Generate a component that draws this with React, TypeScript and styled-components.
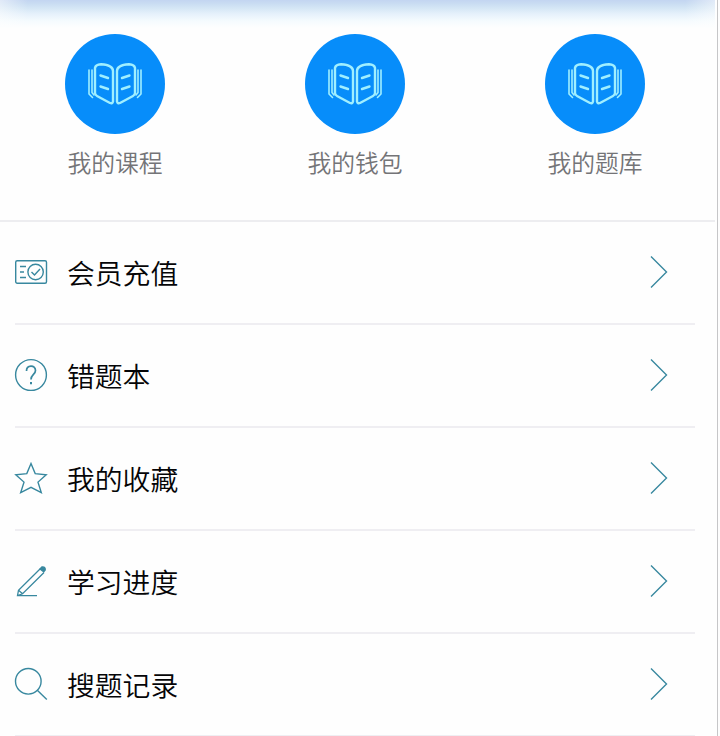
import React from 'react';
import styled, { createGlobalStyle } from 'styled-components';

const GlobalStyle = createGlobalStyle`
  * { box-sizing: border-box; }
  body {
    margin: 0;
    background: #fdfdfd;
    overflow: hidden;
    font-family: "Noto Sans CJK SC", "Noto Sans", sans-serif;
  }
`;

const Page = styled.main`
  width: 718px;
  height: 736px;
  overflow: hidden;
  background: #fefefe;
  border-right: 1px solid #c6c6c8;
`;

const Shortcuts = styled.nav`
  display: flex;
  gap: 140px;
  width: 715px;
  height: 220px;
  padding: 34px 0 0 65px;
  background:
    linear-gradient(to right, rgba(254, 254, 254, 0.5), rgba(254, 254, 254, 0) 28px, rgba(254, 254, 254, 0) 685px, rgba(254, 254, 254, 0.5)) 0 0 / 100% 26px no-repeat,
    linear-gradient(#c3d5f1 0, #c8dbf2 3px, #d4e6f5 8px, #e6f1fb 14px, #f5fbfe 21px, #fefefe 28px);
`;

const Shortcut = styled.a`
  display: flex;
  flex-direction: column;
  align-items: center;
  width: 100px;
`;

const Disc = styled.span`
  display: flex;
  align-items: center;
  justify-content: center;
  width: 100px;
  height: 100px;
  border-radius: 50%;
  background: #078dfa;
`;

const ShortcutLabel = styled.span`
  margin-top: 10px;
  font-size: 23.8px;
  font-weight: 350;
  line-height: 36px;
  white-space: nowrap;
  color: #747477;
`;

const Menu = styled.ul`
  list-style: none;
  width: 715px;
  margin: 0;
  padding: 0;
  border-top: 2px solid #ededf0;
`;

const Row = styled.li`
  display: flex;
  align-items: center;
  width: 680px;
  height: 103px;
  margin-left: 15px;
  padding: 0 27px 2px 0;
  border-bottom: 2px solid #efeef2;
`;

const RowLabel = styled.span`
  flex: 1;
  margin: 0 0 0 20px;
  font-size: 27.8px;
  font-weight: 350;
  line-height: 40px;
  color: #050507;
`;

const Icon = styled.svg`
  display: block;
  overflow: visible;
  fill: none;
  stroke: #38889f;
  stroke-width: 1.4;
`;

const BookIcon = styled(Icon)`
  stroke: #a0efff;
  stroke-width: 2.4;
  stroke-linecap: round;
  stroke-linejoin: round;
`;

const Book = () => (
  <BookIcon width="54" height="42" viewBox="0 0 54 42">
    <path d="M25 8V38.500Q24.500 41 22 40L9 33Q7 32 7 30V5Q7.500 1.500 13 1.200Q25 2 25 8Z" />
    <path d="M29 8V38.500Q29.500 41 32 40L45 33Q47 32 47 30V5Q46.500 1.500 41 1.200Q29 2 29 8Z" />
    <path d="M1 7V31L4.500 34.500M4 7V29.500L6 32M53 7V31L49.500 34.500M50 7V29.500L48 32" strokeWidth="1.600" />
    <path d="M12.500 12.500L20 15M12.500 23.500L20 26M41.500 12.500L34 15M41.500 23.500L34 26" />
  </BookIcon>
);

const glyphs = {
  member: (
    <>
      <rect x="0.700" y="4.700" width="30.800" height="22.600" rx="1.500" />
      <circle cx="20.600" cy="16" r="7.700" />
      <path d="M16.500 16l3 3 5.500-6M5 10.500h6M5 16h4M5 21.500h6" />
    </>
  ),
  question: (
    <>
      <circle cx="16" cy="16" r="15.400" />
      <path d="M11.500 12C11.500 5.500 20.500 5.500 20.500 11.500C20.500 15.500 16 15.500 16 20.500" strokeWidth="1.700" />
      <path d="M16 23v2.200" strokeWidth="2" />
    </>
  ),
  star: <path d="M16 1.500L20.200 11.600L31.200 12.700L23 20.100L26.300 30.600L16 25.300L5.700 30.600L9 20.100L.8 12.700L11.800 11.600Z" />,
  pencil: (
    <>
      <path d="M22 30.600H2.500L3.500 25.200L25 4M3.500 25.200L7.600 28.800M2.500 30.600L7.600 28.800L29 7.500" strokeWidth="1.300" />
      <path d="M25 4L27 2Q30.500 1.500 30.200 5L28.700 6.800Z" fill="#38889f" />
    </>
  ),
  search: (
    <>
      <circle cx="13.300" cy="13.300" r="12.800" />
      <path d="M22.300 22.300L31.800 31.500" />
    </>
  ),
};

const shortcuts = ['我的课程', '我的钱包', '我的题库'];

const items: { icon: keyof typeof glyphs; label: string }[] = [
  { icon: 'member', label: '会员充值' },
  { icon: 'question', label: '错题本' },
  { icon: 'star', label: '我的收藏' },
  { icon: 'pencil', label: '学习进度' },
  { icon: 'search', label: '搜题记录' },
];

export default function App() {
  return (
    <>
      <GlobalStyle />
      <Page>
        <Shortcuts>
          {shortcuts.map((label) => (
            <Shortcut key={label}>
              <Disc><Book /></Disc>
              <ShortcutLabel>{label}</ShortcutLabel>
            </Shortcut>
          ))}
        </Shortcuts>
        <Menu>
          {items.map(({ icon, label }) => (
            <Row key={label}>
              <Icon width="32" height="32" viewBox="0 0 32 32">{glyphs[icon]}</Icon>
              <RowLabel>{label}</RowLabel>
              <Icon width="17" height="32" viewBox="0 0 17 32">
                <path d="M0 0.500L15.500 16L0 31.500" />
              </Icon>
            </Row>
          ))}
        </Menu>
      </Page>
    </>
  );
}
